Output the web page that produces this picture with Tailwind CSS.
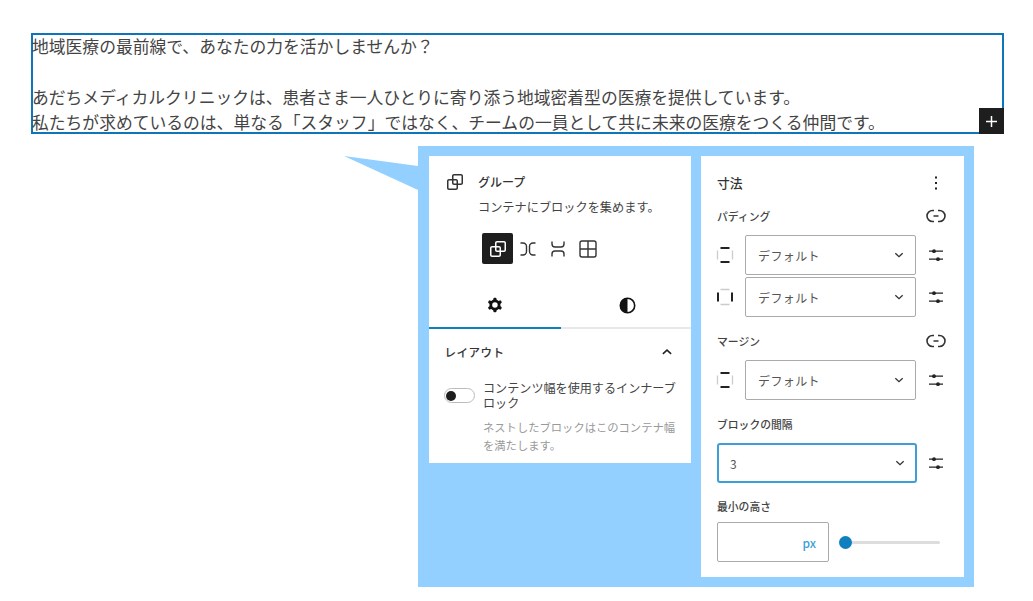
<!DOCTYPE html>
<html lang="ja">
  <head>
    <meta charset="UTF-8">
    <title>グループ ブロック設定</title>
    <script src="https://cdn.jsdelivr.net/npm/@tailwindcss/browser@4"></script>
  </head>
  <body class="bg-white h-[601px] overflow-hidden font-['Noto_Sans_CJK_JP','Noto_Sans',sans-serif]">
    <svg class="hidden">
      <symbol id="group" viewBox="0 0 24 24"><path fill="currentColor" d="M18 4h-7c-1.1 0-2 .9-2 2v3H6c-1.1 0-2 .9-2 2v7c0 1.100.9 2 2 2h7c1.100 0 2-.9 2-2v-3h3c1.100 0 2-.9 2-2V6c0-1.100-.9-2-2-2zm-4.500 14c0 .3-.2.5-.5.5H6c-.3 0-.5-.2-.5-.5v-7c0-.3.2-.5.5-.5h3V13c0 1.100.9 2 2 2h2.500v3zm0-4.500H11c-.3 0-.5-.2-.5-.5v-2.500H13c.3 0 .5.2.5.5v2.500zm5-.5c0 .3-.2.5-.5.5h-3V11c0-1.100-.9-2-2-2h-2.500V6c0-.3.2-.5.5-.5h7c.3 0 .5.2.5.5v7z"/></symbol>
      <symbol id="sliders" viewBox="0 0 20 20"><path fill="currentColor" d="M3 5.500h14v1.300H3zM3 13.500h14v1.300H3z"/><circle cx="8" cy="6.150" r="1.900" fill="currentColor"/><circle cx="12" cy="14.150" r="1.900" fill="currentColor"/></symbol>
      <symbol id="chevron" viewBox="0 0 24 24"><path fill="none" stroke="currentColor" stroke-width="2" d="M6.500 9.500 12 14.500l5.500-5"/></symbol>
      <symbol id="unlink" viewBox="0 0 20 20"><path fill="none" stroke="currentColor" stroke-width="1.600" d="M8 4.500H6.500a5.500 5.500 0 0 0 0 11H8M12 4.500h1.500a5.500 5.500 0 0 1 0 11H12M7.500 10h5"/></symbol>
      <symbol id="side-v" viewBox="0 0 20 20"><path fill="none" stroke="#ccc" stroke-width="1.300" d="M2.500 5.500v9M17.500 5.500v9"/><path fill="none" stroke="#222" stroke-width="2" d="M5.500 3h9M5.500 17h9"/></symbol>
      <symbol id="side-h" viewBox="0 0 20 20"><path fill="none" stroke="#ccc" stroke-width="1.300" d="M5.500 2.500h9M5.500 17.500h9"/><path fill="none" stroke="#222" stroke-width="2" d="M3 5.500v9M17 5.500v9"/></symbol>
    </svg>

    <!-- selected paragraph -->
    <div class="relative ml-[31px] mt-[33px] w-[973px] h-[101px] border-2 border-[#0f75b8] text-[16.800px] leading-[25.300px] text-[#444]">
      <p class="-mt-[1px] -ml-[1px]">地域医療の最前線で、あなたの力を活かしませんか？</p>
      <p class="mt-[25.300px] -ml-[1px]">あだちメディカルクリニックは、患者さま一人ひとりに寄り添う地域密着型の医療を提供しています。</p>
      <p class="-ml-[1px]">私たちが求めているのは、単なる「スタッフ」ではなく、チームの一員として共に未来の医療をつくる仲間です。</p>
      <div class="absolute -right-[2px] -bottom-[2px] w-[25px] h-[26px] bg-[#1e1e1e] flex items-center justify-center">
        <svg class="w-[13px] h-[13px] text-white" viewBox="0 0 13 13"><path fill="none" stroke="currentColor" stroke-width="1.500" d="M6.500 1v11M1 6.500h11"/></svg>
      </div>
    </div>

    <!-- callout -->
    <div class="relative ml-[418px] mt-[12px] w-[556px] h-[441px] bg-[#93d0ff] p-[10px] flex items-start gap-[10px] text-[#333]">
      <svg class="absolute -left-[74px] top-[10px] w-[74px] h-[34px]" viewBox="0 0 74 34"><path fill="#93d0ff" d="M0 0 74 10V34Z"/></svg>

      <!-- left panel -->
      <section class="w-[262px] h-[307px] ml-[1px] bg-white">
        <div class="flex items-center pl-[14px] pt-[14px]">
          <svg class="w-[24px] h-[24px] text-[#333]"><use href="#group"/></svg>
          <h2 class="ml-[11px] text-[12px] font-medium leading-[20px]">グループ</h2>
        </div>
        <p class="ml-[49px] mt-[4px] text-[12.200px] leading-[18px] text-[#444] whitespace-nowrap">コンテナにブロックを集めます。</p>
        <div class="flex items-center ml-[53px] mt-[17px]">
          <div class="w-[31px] h-[31px] bg-[#1e1e1e] rounded-[2px] flex items-center justify-center">
            <svg class="w-[24px] h-[24px] text-white"><use href="#group"/></svg>
          </div>
          <svg class="w-[20px] h-[20px] text-[#333] ml-[4.500px]" viewBox="0 0 20 20"><path fill="none" stroke="currentColor" stroke-width="1.400" d="M2.500 4H5a3.500 3.500 0 0 1 3.500 3.500v5A3.500 3.500 0 0 1 5 16H2.500M17.500 4H15a3.500 3.500 0 0 0-3.500 3.500v5A3.500 3.500 0 0 0 15 16h2.500"/></svg>
          <svg class="w-[20px] h-[20px] text-[#333] ml-[10.500px]" viewBox="0 0 20 20"><path fill="none" stroke="currentColor" stroke-width="1.400" d="M4 2.500V5a3 3 0 0 0 3 3h6a3 3 0 0 0 3-3V2.500M4 17.500V15a3 3 0 0 1 3-3h6a3 3 0 0 1 3 3v2.500"/></svg>
          <svg class="w-[20px] h-[20px] text-[#333] ml-[10px]" viewBox="0 0 20 20"><path fill="none" stroke="currentColor" stroke-width="1.400" d="M4 2h12a2 2 0 0 1 2 2v12a2 2 0 0 1-2 2H4a2 2 0 0 1-2-2V4a2 2 0 0 1 2-2zM10 2v16M2 10h16"/></svg>
        </div>
        <div class="flex mt-[25px] h-[40px] border-b-2 border-[#e8e8e8]">
          <div class="w-[132px] -mb-[2px] border-b-2 border-[#0f7fc0] flex items-center justify-center pb-[6px]">
            <svg class="w-[22px] h-[22px] text-[#111]" viewBox="0 0 24 24"><path fill="currentColor" fill-rule="evenodd" d="M10.289 4.836A1 1 0 0 1 11.275 4h1.306a1 1 0 0 1 .987.836l.244 1.466c.787.26 1.503.679 2.108 1.218l1.393-.522a1 1 0 0 1 1.216.437l.653 1.130a1 1 0 0 1-.23 1.273l-1.148.944a6.025 6.025 0 0 1 0 2.435l1.149.946a1 1 0 0 1 .23 1.272l-.653 1.130a1 1 0 0 1-1.216.437l-1.394-.522c-.605.54-1.320.958-2.108 1.218l-.244 1.466a1 1 0 0 1-.987.836h-1.306a1 1 0 0 1-.986-.836l-.244-1.466a5.995 5.995 0 0 1-2.108-1.218l-1.394.522a1 1 0 0 1-1.217-.436l-.653-1.131a1 1 0 0 1 .23-1.272l1.149-.946a6.026 6.026 0 0 1 0-2.435l-1.148-.944a1 1 0 0 1-.23-1.272l.653-1.131a1 1 0 0 1 1.217-.437l1.393.522a5.994 5.994 0 0 1 2.108-1.218l.244-1.466zM14.929 12a3 3 0 1 1-6 0 3 3 0 0 1 6 0z"/></svg>
          </div>
          <div class="flex-1 flex items-center justify-center pb-[6px] pl-[3px]">
            <svg class="w-[17px] h-[17px] text-[#111]" viewBox="0 0 17 17"><circle cx="8.500" cy="8.500" r="7.200" fill="none" stroke="currentColor" stroke-width="1.600"/><path fill="currentColor" d="M8.500 1.300a7.200 7.200 0 0 0 0 14.400z"/></svg>
          </div>
        </div>
        <div class="flex items-center justify-between pl-[15.500px] pr-[15px] mt-[13px]">
          <h3 class="text-[11.500px] font-medium leading-[20px] tracking-[0.5px]">レイアウト</h3>
          <svg class="w-[18px] h-[18px] text-[#222] rotate-180"><use href="#chevron"/></svg>
        </div>
        <div class="flex pl-[15px] mt-[18px]">
          <div class="relative w-[31px] h-[15px] mt-[8px] shrink-0 rounded-full border border-[#bbb] bg-white">
            <span class="absolute left-[1px] top-[1.500px] w-[10px] h-[10px] rounded-full bg-[#1e1e1e]"></span>
          </div>
          <div class="ml-[8px]">
            <p class="w-[196px] text-[12.100px] leading-[15px] text-[#444]">コンテンツ幅を使用するインナーブロック</p>
            <p class="w-[194px] mt-[8px] text-[11.300px] leading-[18px] text-[#999]">ネストしたブロックはこのコンテナ幅を満たします。</p>
          </div>
        </div>
      </section>

      <!-- right panel -->
      <section class="w-[263px] h-[421px] bg-white px-[16px] pt-[17px] text-[#444]">
        <div class="flex items-center justify-between h-[20px]">
          <h2 class="text-[12.800px] font-medium text-[#333]">寸法</h2>
          <svg class="w-[20px] h-[20px] text-[#222] mr-[2px]" viewBox="0 0 20 20"><path fill="currentColor" d="M9 3.500h2v2H9zM9 9h2v2H9zM9 14.500h2v2H9z"/></svg>
        </div>
        <div class="flex items-center justify-between h-[20px] mt-[13px]">
          <h3 class="text-[10.800px] font-medium text-[#444]">パディング</h3>
          <svg class="w-[20px] h-[20px] text-[#333] mr-[2px]"><use href="#unlink"/></svg>
        </div>
        <div class="flex items-center mt-[9px] h-[40px]">
          <svg class="w-[20px] h-[20px] shrink-0 -ml-[2px]"><use href="#side-v"/></svg>
          <div class="ml-[10px] w-[171px] h-[40px] border border-[#aaa] rounded-[2px] pl-[12px] pr-[8px] flex items-center justify-between text-[12px] tracking-[0.4px] text-[#555]"><span class="pt-[2px]">デフォルト</span><svg class="w-[16px] h-[16px] text-[#333]"><use href="#chevron"/></svg></div>
          <svg class="w-[20px] h-[20px] text-[#222] ml-[10px]"><use href="#sliders"/></svg>
        </div>
        <div class="flex items-center mt-[2px] h-[40px]">
          <svg class="w-[20px] h-[20px] shrink-0 -ml-[2px]"><use href="#side-h"/></svg>
          <div class="ml-[10px] w-[171px] h-[40px] border border-[#aaa] rounded-[2px] pl-[12px] pr-[8px] flex items-center justify-between text-[12px] tracking-[0.4px] text-[#555]"><span class="pt-[2px]">デフォルト</span><svg class="w-[16px] h-[16px] text-[#333]"><use href="#chevron"/></svg></div>
          <svg class="w-[20px] h-[20px] text-[#222] ml-[10px]"><use href="#sliders"/></svg>
        </div>
        <div class="flex items-center justify-between h-[20px] mt-[14px]">
          <h3 class="text-[10.800px] font-medium text-[#444]">マージン</h3>
          <svg class="w-[20px] h-[20px] text-[#333] mr-[2px]"><use href="#unlink"/></svg>
        </div>
        <div class="flex items-center mt-[9px] h-[40px]">
          <svg class="w-[20px] h-[20px] shrink-0 -ml-[2px]"><use href="#side-v"/></svg>
          <div class="ml-[10px] w-[171px] h-[40px] border border-[#aaa] rounded-[2px] pl-[12px] pr-[8px] flex items-center justify-between text-[12px] tracking-[0.4px] text-[#555]"><span class="pt-[2px]">デフォルト</span><svg class="w-[16px] h-[16px] text-[#333]"><use href="#chevron"/></svg></div>
          <svg class="w-[20px] h-[20px] text-[#222] ml-[10px]"><use href="#sliders"/></svg>
        </div>
        <h3 class="text-[10.800px] font-medium leading-[20px] mt-[14px]">ブロックの間隔</h3>
        <div class="flex items-center mt-[9px] h-[40px]">
          <div class="w-[200px] h-[40px] border-2 border-[#3d9fd3] rounded-[3px] pl-[11px] pr-[7px] flex items-center justify-between text-[12px] text-[#555]"><span class="pt-[2px]">3</span><svg class="w-[16px] h-[16px] text-[#333]"><use href="#chevron"/></svg></div>
          <svg class="w-[20px] h-[20px] text-[#222] ml-[9px]"><use href="#sliders"/></svg>
        </div>
        <h3 class="text-[10.800px] font-medium leading-[20px] mt-[13px]">最小の高さ</h3>
        <div class="flex items-center mt-[6px] h-[40px]">
          <div class="w-[112px] h-[40px] border border-[#aaa] rounded-[2px] pr-[12px] pt-[2px] flex items-center justify-end text-[12px] font-medium text-[#3d9fd3]">px</div>
          <div class="relative ml-[10px] w-[101px] h-[3px] rounded-full bg-[#ddd]">
            <span class="absolute left-0 -top-[5px] w-[13px] h-[13px] rounded-full bg-[#0f7fc0]"></span>
          </div>
        </div>
      </section>
    </div>
  </body>
</html>
